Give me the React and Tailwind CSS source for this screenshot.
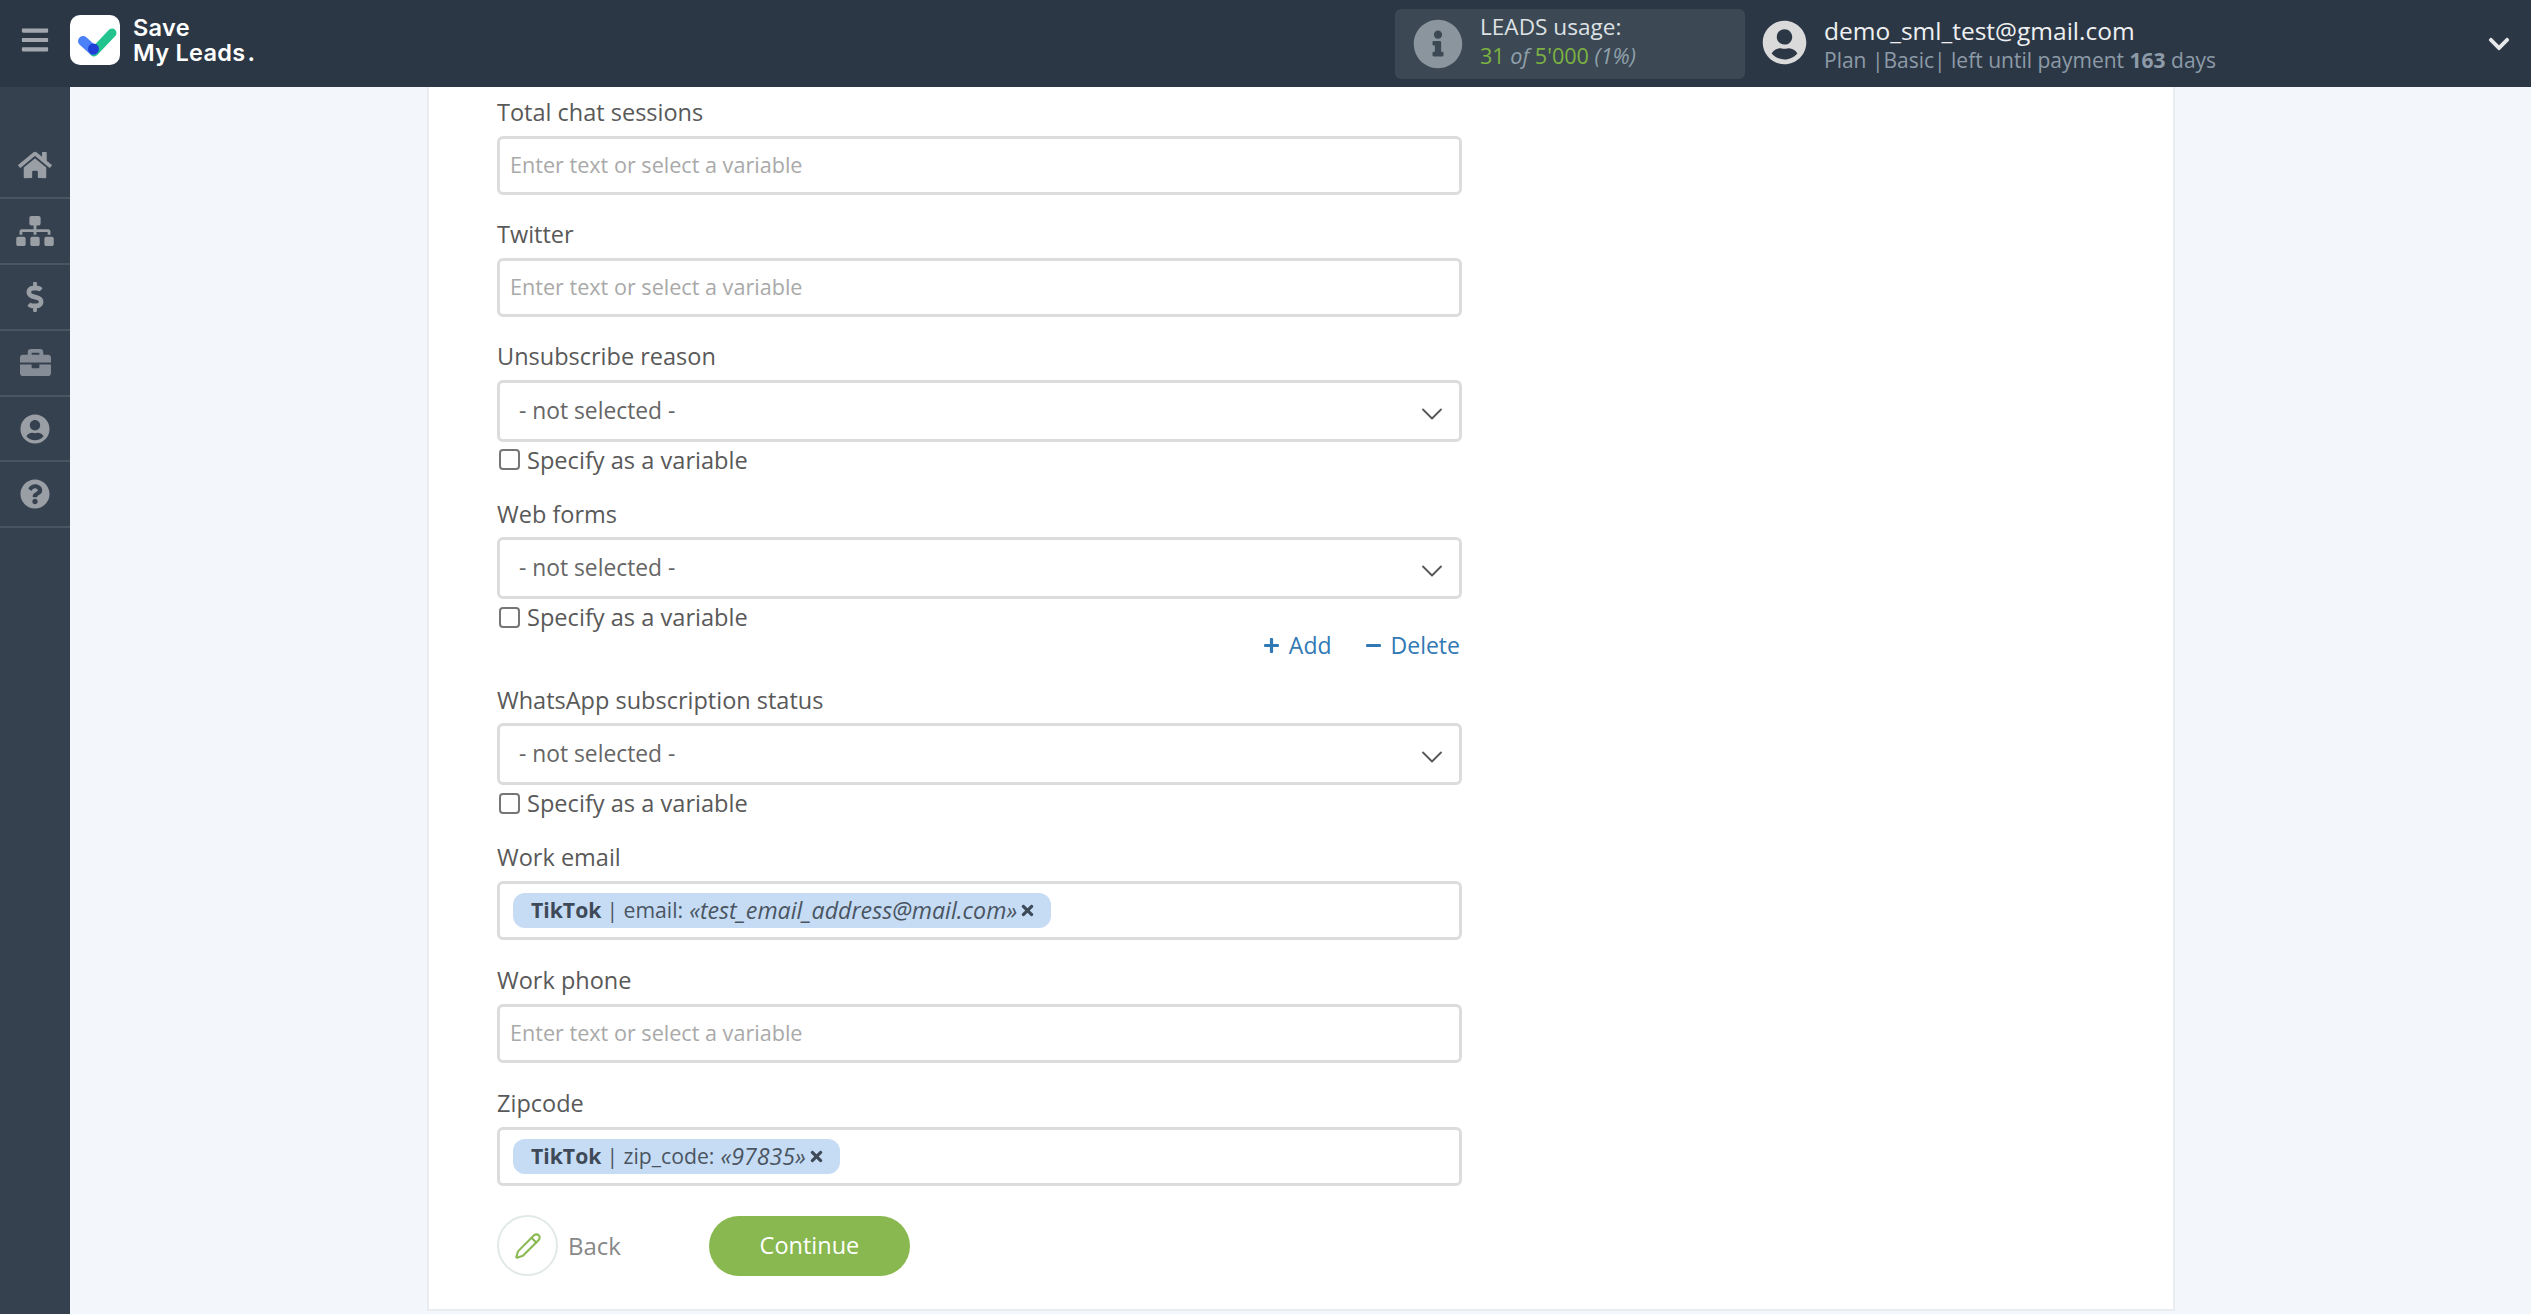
import React from 'react';
import { ChevronDown, Pencil } from 'lucide-react';
import {
  FaBars,
  FaBriefcase,
  FaChevronDown,
  FaDollarSign,
  FaHome,
  FaInfoCircle,
  FaMinus,
  FaPlus,
  FaQuestionCircle,
  FaSitemap,
  FaTimes,
  FaUserCircle,
} from 'react-icons/fa';

const navItems = [
  { icon: FaHome, cls: 'w-[34px] h-[30px] text-[#9a9fa6]' },
  { icon: FaSitemap, cls: 'w-[38px] h-[30px] text-[#9a9fa6]' },
  { icon: FaDollarSign, cls: 'w-[18px] h-[30px] text-[#9a9fa6]' },
  { icon: FaBriefcase, cls: 'w-[31px] h-[31px] text-[#858c95]' },
  { icon: FaUserCircle, cls: 'w-[30px] h-[30px] text-[#9a9fa6]' },
  { icon: FaQuestionCircle, cls: 'w-[30px] h-[30px] text-[#9a9fa6]' },
];

function Logo() {
  return (
    <div className="flex items-center -mt-[7px]">
      <div className="w-[50px] h-[50px] rounded-[10px] bg-white flex items-center justify-center">
        <svg viewBox="0 0 50 50" className="w-[50px] h-[50px]">
          <path d="M24 37 L42 18" stroke="#22c38e" strokeWidth="9" strokeLinecap="round" />
          <path d="M13 26 L23 35" stroke="#4a80f8" strokeWidth="10" strokeLinecap="round" />
          <circle cx="23.5" cy="34" r="5.5" fill="#1f3fd6" />
        </svg>
      </div>
      <div className="ml-[13px] font-['Inter',sans-serif] text-[23.5px] leading-[25px] font-semibold text-white tracking-[0.3px]">
        <div>Save</div>
        <div>My Leads<span className="ml-[2px]">.</span></div>
      </div>
    </div>
  );
}

function Header() {
  return (
    <header className="h-[87px] bg-[#2c3745] flex items-center shrink-0">
      <div className="w-[70px] flex justify-center -mt-[7px]">
        <FaBars className="w-[28px] h-[30px] text-[#a3a8ae]" />
      </div>
      <Logo />
      {/* Usage + account block */}
      <div className="ml-auto flex items-center">
        <div className="w-[350px] h-[70px] rounded-[6px] bg-[#3c4853] flex items-center pl-[18px]">
          <FaInfoCircle className="w-[50px] h-[50px] text-[#8b959d]" />
          <div className="ml-[17px] -mt-[6px]">
            <div className="text-[22.6px] leading-[30px] text-[#dde1e4]">LEADS usage:</div>
            <div className="text-[21.6px] leading-[28px] text-[#8fa0ab] italic">
              <span className="not-italic text-[#7cb342]">31</span> of <span className="not-italic text-[#7cb342]">5'000</span> (1%)
            </div>
          </div>
        </div>
        <FaUserCircle className="ml-[17px] -mt-[2px] w-[45px] h-[45px] text-[#dadada]" />
        <div className="ml-[17px] w-[707px] flex items-center justify-between pr-[20px]">
          <div>
            <div className="text-[24.5px] leading-[32px] text-[#eef0f2]">demo_sml_test@gmail.com</div>
            <div className="text-[21px] leading-[26px] text-[#8d9ba8]">
              Plan |Basic| left until payment <b className="font-bold">163</b> days
            </div>
          </div>
          <FaChevronDown className="w-[24px] h-[24px] text-[#e6e8ea]" />
        </div>
      </div>
    </header>
  );
}

function Sidebar() {
  return (
    <aside className="w-[70px] bg-[#36414f] pt-[46px] shrink-0">
      {navItems.map((item, i) => {
        const Icon = item.icon;
        return (
          <div key={i} className="h-[65.9px] border-b-2 border-[#4a5562] flex items-center justify-center">
            <Icon className={item.cls} />
          </div>
        );
      })}
    </aside>
  );
}

function Label({ children }) {
  return <div className="h-[32px] mb-[7.5px] text-[23.5px] leading-[32px] text-[#595959]">{children}</div>;
}

function TextInput({ children }) {
  return (
    <div className="h-[59.5px] border-[3px] border-[#dcdcdc] rounded-[6px] bg-white flex items-center pl-[10px] text-[21.6px] text-[#a9a9a9]">
      {children || 'Enter text or select a variable'}
    </div>
  );
}

function SelectBox() {
  return (
    <div className="h-[62px] border-[3px] border-[#dcdcdc] rounded-[6px] bg-white flex items-center justify-between pl-[19px] pr-[9px] text-[22.8px] text-[#666666]">
      <span className="mt-[1px]">- not selected -</span>
      <ChevronDown className="w-[36px] h-[36px] text-[#555555] mt-[6px]" strokeWidth={1.2} />
    </div>
  );
}

function Specify() {
  return (
    <label className="h-[32px] mt-[2px] flex items-center text-[23.6px] leading-[32px] text-[#595959]">
      <span className="w-[21px] h-[21px] ml-[2px] mr-[7px] rounded-[4px] border-2 border-[#767676] bg-white" />
      Specify as a variable
    </label>
  );
}

function Chip({ name, value, field }) {
  return (
    <span className="h-[35px] ml-[3px] pl-[18px] pr-[16px] rounded-[12px] bg-[#c6dcf5] flex items-center text-[21.2px] text-[#4a5562]">
      <b className="font-bold text-[#3f4a58]">{name}</b>
      <span className="ml-[5px]">| {field}:</span>
      <i className="ml-[6px] text-[23.2px]">«{value}»</i>
      <FaTimes className="ml-[3px] w-[15px] h-[17px] text-[#3f4a58]" />
    </span>
  );
}

export default function App() {
  return (
    <div className="h-[1314px] overflow-hidden flex flex-col bg-[#f3f6fb] font-['Open_Sans',sans-serif]">
      <Header />
      <div className="flex flex-1 min-h-0">
        <Sidebar />
        <main className="flex-1 pl-[357px]">
          <div className="w-[1748px] h-[1224px] bg-white border-l-2 border-r-2 border-b-2 border-[#e9edf2] pl-[68px] pt-[9px]">
            <div className="w-[965px]">
              <Label>Total chat sessions</Label>
              <TextInput />
              <div className="h-[23px]" />
              <Label>Twitter</Label>
              <TextInput />
              <div className="h-[23px]" />
              <Label>Unsubscribe reason</Label>
              <SelectBox />
              <Specify />
              <div className="h-[22px]" />
              <Label>Web forms</Label>
              <SelectBox />
              <Specify />
              <div className="h-[28px] flex justify-end items-center text-[23px] text-[#3179b5] -mt-[2px]">
                <FaPlus className="w-[17px] h-[17px]" />
                <span className="ml-[9px]">Add</span>
                <FaMinus className="ml-[33px] w-[17px] h-[17px]" />
                <span className="ml-[9px] mr-[2px]">Delete</span>
              </div>
              <div className="h-[24.5px]" />
              <Label>WhatsApp subscription status</Label>
              <SelectBox />
              <Specify />
              <div className="h-[22px]" />
              <Label>Work email</Label>
              <TextInput>
                <Chip name="TikTok" field="email" value="test_email_address@mail.com" />
              </TextInput>
              <div className="h-[24px]" />
              <Label>Work phone</Label>
              <TextInput />
              <div className="h-[24px]" />
              <Label>Zipcode</Label>
              <TextInput>
                <Chip name="TikTok" field="zip_code" value="97835" />
              </TextInput>
              <div className="mt-[29px] flex items-center">
                <div className="w-[61px] h-[61px] rounded-full border-2 border-[#e2eae6] flex items-center justify-center">
                  <Pencil className="w-[28px] h-[28px] text-[#8ab952]" strokeWidth={1.8} />
                </div>
                <span className="ml-[10px] text-[24px] text-[#888888]">Back</span>
                <button className="ml-[88px] w-[201px] h-[60px] rounded-full bg-[#88b84f] text-white text-[23.5px]">Continue</button>
              </div>
            </div>
          </div>
        </main>
      </div>
    </div>
  );
}
